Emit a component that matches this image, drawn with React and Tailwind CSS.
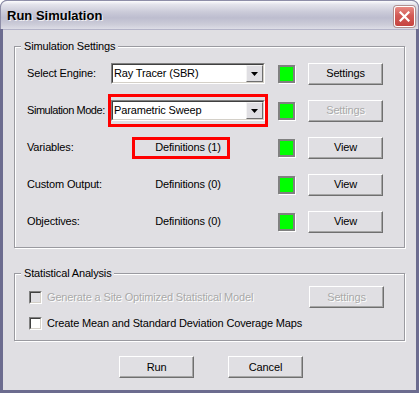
import React from "react";

function Btn({ children, disabled }) {
  return (
    <div className="w-[75px] h-[22px] flex items-center justify-center bg-[#e0dfe3] border border-t-white border-l-white border-b-[#6f6f6f] border-r-[#6f6f6f] shadow-[inset_-1px_-1px_0_#a6a6a6]">
      <span
        className={
          disabled
            ? "text-[#a9a9a9] [text-shadow:1px_1px_0_#ffffff]"
            : "text-black"
        }
      >
        {children}
      </span>
    </div>
  );
}

function Green() {
  return (
    <div className="w-[17px] h-[18px] border-2 border-[#808080] shadow-[1px_1px_0_#ffffff] bg-[#00ff00] box-border" />
  );
}

function Combo({ text }) {
  return (
    <div className="w-[154px] h-[21px] flex border border-t-[#808080] border-l-[#808080] border-b-white border-r-white">
      <div className="flex-1 flex border border-t-[#404040] border-l-[#404040] border-b-[#d4d0c8] border-r-[#d4d0c8] bg-white">
        <div className="flex-1 flex items-center pl-[1px] text-black whitespace-nowrap">{text}</div>
        <div className="w-[17px] flex items-center justify-center bg-[#e0dfe3] border border-t-[#f4f4f4] border-l-[#f4f4f4] border-b-[#6f6f6f] border-r-[#6f6f6f]">
          <svg width="7" height="4" viewBox="0 0 7 4">
            <path d="M0 0h7L3.5 4z" fill="#000" />
          </svg>
        </div>
      </div>
    </div>
  );
}

function Row({ label, labelClass = "", middle, disabledBtn, btn, overlay }) {
  return (
    <div className="relative h-[37px] flex items-center">
      <div className={"w-[84px] text-black whitespace-nowrap " + labelClass}>{label}</div>
      <div className="w-[154px] flex items-center justify-center whitespace-nowrap">{middle}</div>
      <div className="ml-[13px]">
        <Green />
      </div>
      <div className="ml-[13px]">
        <Btn disabled={disabledBtn}>{btn}</Btn>
      </div>
      {overlay}
    </div>
  );
}

function Group({ title, className, children }) {
  return (
    <div
      className={
        "relative border border-[#9a9aa0] shadow-[inset_1px_1px_0_#ffffff,1px_1px_0_#ffffff] " +
        className
      }
    >
      <div className="absolute left-[6px] top-[-8px] px-[3px] bg-[#e0dfe3] text-black leading-[14px] whitespace-nowrap">
        {title}
      </div>
      {children}
    </div>
  );
}

function Check({ disabled, label }) {
  return (
    <div className="h-[26px] flex items-center">
      <div className="w-[13px] h-[13px] border border-t-[#808080] border-l-[#808080] border-b-white border-r-white">
        <div
          className={
            "w-full h-full border border-t-[#404040] border-l-[#404040] border-b-[#d4d0c8] border-r-[#d4d0c8] " +
            (disabled ? "bg-[#e0dfe3]" : "bg-white")
          }
        />
      </div>
      <div
        className={
          "ml-[5px] whitespace-nowrap " +
          (disabled
            ? "text-[#a9a9a9] [text-shadow:1px_1px_0_#ffffff]"
            : "text-black")
        }
      >
        {label}
      </div>
    </div>
  );
}

export default function App() {
  return (
    <div className="w-[419px] h-[393px] flex flex-col bg-[#6c6c8f] rounded-t-[7px] overflow-hidden font-['Liberation_Sans',Arial,sans-serif] text-[11px] tracking-[-0.15px] select-none">
      {/* title bar */}
      <div className="h-[29px] shrink-0 flex items-center rounded-t-[7px] border border-b-0 border-[#8e8ea8] bg-[linear-gradient(to_bottom,#fdfdfe_0%,#e4e4ec_12%,#cacad8_40%,#bdbdcf_60%,#cdcdd9_85%,#dddde6_100%)]">
        <div className="ml-[6px] text-[13px] font-bold tracking-normal text-black [text-shadow:1px_1px_0_#f0f0f4] leading-none">
          Run Simulation
        </div>
        <div className="ml-auto mr-[3px] mt-[2px] w-[21px] h-[21px] rounded-[3px] border border-white bg-[linear-gradient(to_bottom,#e88a84_0%,#d25a55_45%,#c64440_100%)] flex items-center justify-center shadow-[0_0_0_1px_#b09090]">
          <svg width="11" height="11" viewBox="0 0 11 11">
            <path
              d="M1.5 1.5L9.5 9.5M9.5 1.5L1.5 9.5"
              stroke="#fff"
              strokeWidth="2.2"
              strokeLinecap="square"
            />
          </svg>
        </div>
      </div>
      {/* client */}
      <div className="flex-1 mx-[3px] mb-[3px] bg-[#e0dfe3] border-t border-[#b4b4c8] flex flex-col">
        <Group title="Simulation Settings" className="mt-[16px] ml-[11px] w-[391px] pt-[8px] pb-[7px] pl-[12px]">
          <Row
            label="Select Engine:"
            middle={<Combo text="Ray Tracer (SBR)" />}
            btn="Settings"
          />
          <Row
            label="Simulation Mode:"
            labelClass="tracking-[-0.45px]"
            middle={<Combo text="Parametric Sweep" />}
            btn="Settings"
            disabledBtn
            overlay={
              <div className="absolute left-[81px] top-[2px] w-[160px] h-[33px] border-[3px] border-[#ff0000]" />
            }
          />
          <Row
            label="Variables:"
            middle={<span>Definitions (1)</span>}
            btn="View"
            overlay={
              <div className="absolute left-[105px] top-[8px] w-[98px] h-[22px] border-[3px] border-[#ff0000]" />
            }
          />
          <Row label="Custom Output:" middle={<span>Definitions (0)</span>} btn="View" />
          <Row label="Objectives:" middle={<span>Definitions (0)</span>} btn="View" />
        </Group>
        <Group title="Statistical Analysis" className="mt-[25px] ml-[11px] w-[391px] pt-[10px] pb-[4px] pl-[14px] pr-[20px]">
          <div className="flex items-center justify-between">
            <Check disabled label="Generate a Site Optimized Statistical Model" />
            <Btn disabled>Settings</Btn>
          </div>
          <Check label="Create Mean and Standard Deviation Coverage Maps" />
        </Group>
        <div className="mt-[15px] pl-[116px] flex gap-[34px]">
          <Btn>Run</Btn>
          <Btn>Cancel</Btn>
        </div>
      </div>
    </div>
  );
}
